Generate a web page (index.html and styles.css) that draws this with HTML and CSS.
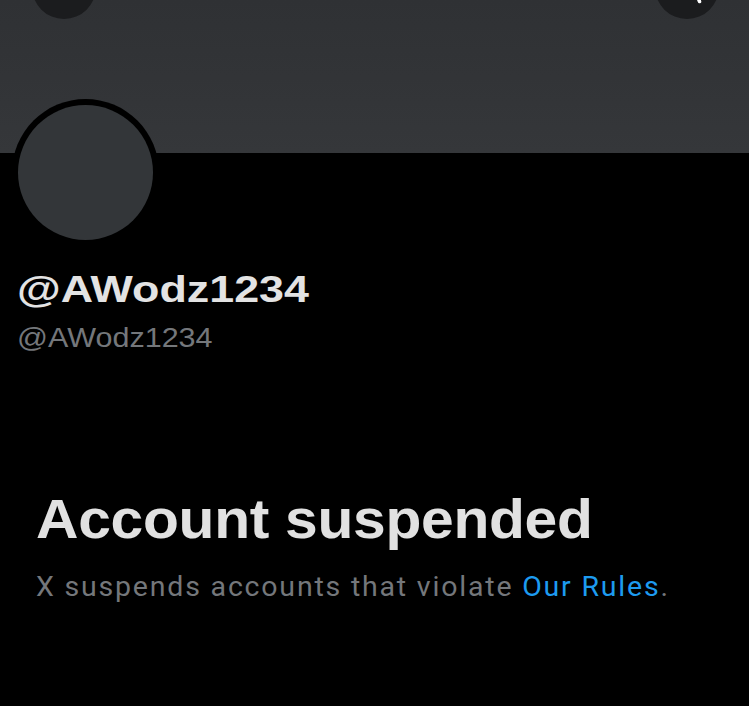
FILE: index.html
```html
<!DOCTYPE html>
<html lang="en">
<head>
<meta charset="utf-8">
<title>@AWodz1234 / X</title>
<link rel="stylesheet" href="styles.css">
</head>
<body>
<div class="profile">
  <div class="banner">
    <div class="topbar">
      <button class="round-btn" aria-label="Back">
        <svg viewBox="0 0 24 24" width="30" height="30"><path d="M7.414 13l5.043 5.04-1.414 1.42L3.586 12l7.457-7.46 1.414 1.42L7.414 11H21v2H7.414z" fill="#fff"/></svg>
      </button>
      <button class="round-btn search" aria-label="Search">
        <svg viewBox="0 0 64 64" width="64" height="64"><circle cx="30" cy="22" r="12" fill="none" stroke="#fff" stroke-width="3.4"/><path d="M39 31.5 L44.5 46.5" stroke="#fff" stroke-width="3.6" stroke-linecap="round"/></svg>
      </button>
    </div>
  </div>
  <div class="avatar-row">
    <div class="avatar"><div class="avatar-inner"></div></div>
  </div>
  <div class="names">
    <div class="display-name">@AWodz1234</div>
    <div class="handle">@AWodz1234</div>
  </div>
  <div class="suspended">
    <h1 class="title">Account suspended</h1>
    <p class="desc">X suspends accounts that violate <a class="link" href="#">Our Rules</a>.</p>
  </div>
</div>
</body>
</html>
```
FILE: styles.css
```css
html, body {
  margin: 0;
  padding: 0;
  background: #000;
}
body {
  min-height: 706px;
  overflow: hidden;
}
.profile {
  display: flex;
  flex-direction: column;
}
.banner {
  position: relative;
  height: 153px;
  background: linear-gradient(#2f3134, #35373a);
}
.topbar {
  position: absolute;
  top: -45px;
  left: 32px;
  right: 30px;
  display: flex;
  justify-content: space-between;
}
.round-btn {
  width: 64px;
  height: 64px;
  border: 0;
  padding: 0;
  border-radius: 50%;
  background: #1b1c1e;
  display: flex;
  align-items: center;
  justify-content: center;
  overflow: hidden;
}
.round-btn.search {
  display: block;
}
.round-btn svg {
  display: block;
}
.avatar-row {
  position: relative;
  z-index: 1;
  display: flex;
  padding-left: 12px;
  margin-top: -54px;
}
.avatar {
  width: 147px;
  height: 147px;
  box-sizing: border-box;
  border-radius: 50%;
  background: #000;
  padding: 6px;
}
.avatar-inner {
  width: 100%;
  height: 100%;
  border-radius: 50%;
  background: #333639;
}
.names {
  padding-left: 17px;
  margin-top: 21px;
  display: flex;
  flex-direction: column;
  align-items: flex-start;
  gap: 10px;
}
.display-name {
  font-family: "Liberation Sans", Arial, sans-serif;
  font-weight: 700;
  font-size: 37.5px;
  line-height: 44px;
  color: #e3e3e3;
  transform: scaleX(1.195);
  transform-origin: left center;
  white-space: nowrap;
}
.handle {
  font-family: "Liberation Sans", Arial, sans-serif;
  font-size: 28px;
  line-height: 34px;
  color: #74777b;
  transform: scaleX(1.09);
  transform-origin: left center;
  white-space: nowrap;
}
.suspended {
  padding-left: 36px;
  margin-top: 131px;
  display: flex;
  flex-direction: column;
  align-items: flex-start;
  gap: 18px;
}
.title {
  margin: 0;
  font-family: "Liberation Sans", Arial, sans-serif;
  font-weight: 700;
  font-size: 56px;
  line-height: 66px;
  color: #e1e1e1;
  letter-spacing: -0.3px;
  transform: scaleX(1.05);
  transform-origin: left center;
  white-space: nowrap;
}
.desc {
  margin: 0;
  font-family: Roboto, "Liberation Sans", sans-serif;
  font-size: 28.5px;
  line-height: 34px;
  color: #74777b;
  letter-spacing: 1.8px;
  white-space: nowrap;
}
.link {
  color: #1d9bf0;
  text-decoration: none;
}
```
